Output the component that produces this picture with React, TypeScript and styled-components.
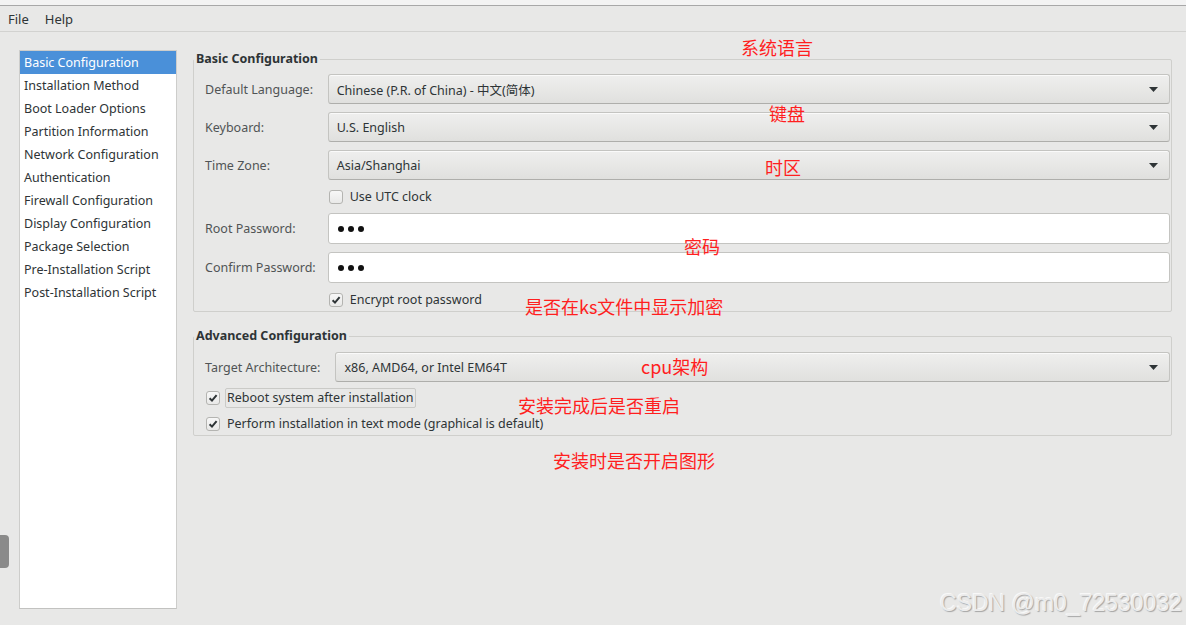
import React from 'react';
import styled, { createGlobalStyle } from 'styled-components';

const GlobalStyle = createGlobalStyle`
  html, body {
    margin: 0;
    padding: 0;
    background: #e8e8e7;
  }
  body {
    font-family: "Noto Sans", "Noto Sans CJK SC", sans-serif;
    font-size: 12.5px;
    color: #2e3436;
  }
`;

const Window = styled.div`
  position: relative;
  width: 1186px;
  height: 625px;
  overflow: hidden;
  background: #e8e8e7;
`;

const TopStrip = styled.div`
  height: 5px;
  background: #f3f3f3;
  border-bottom: 1px solid #a8a8a8;
`;

const MenuBar = styled.div`
  height: 25px;
  display: flex;
  align-items: center;
  gap: 16px;
  padding-left: 8px;
  border-bottom: 1px solid #d2d2d0;
  font-size: 13px;
`;

const MenuItem = styled.span`
  color: #2e3436;
`;

const Body = styled.div`
  display: flex;
  gap: 16px;
  padding: 18px 0 0 19px;
`;

const Sidebar = styled.ul`
  list-style: none;
  margin: 0;
  padding: 0;
  width: 156px;
  height: 557px;
  background: #ffffff;
  border: 1px solid #cdcdcb;
  border-bottom-color: #c2c2c0;
`;

const SideItem = styled.li<{ $active?: boolean }>`
  height: 23px;
  line-height: 23px;
  padding-left: 4px;
  white-space: nowrap;
  background: ${(p) => (p.$active ? '#4a90d9' : 'transparent')};
  color: ${(p) => (p.$active ? '#ffffff' : '#2e3436')};
`;

const Main = styled.div`
  width: 979px;
  display: flex;
  flex-direction: column;
  gap: 16px;
  padding-top: 1px;
`;

const Frame = styled.fieldset`
  margin: 0;
  padding: 0;
  min-width: 0;
  border: 1px solid #cfcfcc;
  border-radius: 2px;
`;

const Legend = styled.legend`
  padding: 0 2px;
  line-height: 16px;
  font-weight: bold;
  font-size: 12.5px;
  color: #2e3436;
`;

const FormGrid = styled.div<{ $top: number; $bottom: number; $gap: number; $colGap: number }>`
  display: grid;
  grid-template-columns: auto 1fr;
  column-gap: ${(p) => p.$colGap}px;
  row-gap: ${(p) => p.$gap}px;
  align-items: center;
  padding: ${(p) => p.$top}px 1px ${(p) => p.$bottom}px 11px;
`;

const FieldLabel = styled.label`
  color: #505455;
  white-space: nowrap;
`;

const Combo = styled.div`
  height: 28px;
  display: flex;
  align-items: center;
  justify-content: space-between;
  padding: 0 11px 0 8px;
  border: 1px solid #c4c4c1;
  border-bottom-color: #aeaeab;
  border-radius: 3px;
  background: linear-gradient(#efefee, #e0e0de);
  box-shadow: inset 0 1px 0 rgba(255, 255, 255, 0.7);
  color: #2e3436;
`;

const Entry = styled.div`
  height: 29px;
  display: flex;
  align-items: center;
  gap: 4px;
  padding-left: 9px;
  border: 1px solid #c4c4c1;
  border-radius: 3px;
  background: #ffffff;
`;

const Dot = styled.span`
  width: 6px;
  height: 6px;
  border-radius: 50%;
  background: #111111;
`;

const CheckRow = styled.div<{ $span?: boolean; $indent?: number }>`
  grid-column: ${(p) => (p.$span ? '1 / -1' : '2')};
  display: flex;
  align-items: center;
  gap: 5px;
  height: ${(p) => (p.$span ? 20 : 17)}px;
  margin-left: ${(p) => p.$indent ?? 1}px;
`;

const Box = styled.span`
  width: 12px;
  height: 12px;
  flex: none;
  display: flex;
  align-items: center;
  justify-content: center;
  border: 1px solid #b4b4b1;
  border-radius: 3px;
  background: linear-gradient(#f7f7f7, #e9e9e8);
`;

const CheckLabel = styled.span<{ $focus?: boolean }>`
  padding: 0 1px;
  line-height: 18px;
  border: 1px solid ${(p) => (p.$focus ? '#cacac7' : 'transparent')};
  border-radius: 2px;
  white-space: nowrap;
  color: #2e3436;
`;

const Note = styled.span<{ $x: number; $y: number }>`
  position: absolute;
  left: ${(p) => p.$x}px;
  top: ${(p) => p.$y}px;
  font-family: "Noto Sans CJK SC", "Noto Sans", sans-serif;
  font-size: 18px;
  line-height: 18px;
  color: #ff1f1f;
  white-space: nowrap;
`;

const Watermark = styled.span`
  position: absolute;
  right: 4px;
  bottom: 8px;
  font-family: "Liberation Sans", Arial, sans-serif;
  font-size: 23px;
  color: #ececec;
  text-shadow: 1px 1px 1px #a4a4a4, -1px -1px 0 #f8f8f8;
  white-space: nowrap;
`;

const Handle = styled.span`
  position: absolute;
  left: 0;
  top: 535px;
  width: 9px;
  height: 33px;
  background: #8a8a8a;
  border-radius: 0 4px 4px 0;
`;

const Arrow = () => (
  <svg width="9" height="5" viewBox="0 0 9 5">
    <path d="M0 0h9L4.5 5z" fill="#2e3436" />
  </svg>
);

const Tick = () => (
  <svg width="10" height="10" viewBox="0 0 10 10">
    <path d="M1.6 5.2 4 7.6 8.6 2.2" fill="none" stroke="#2e3436" strokeWidth="2" />
  </svg>
);

const Check: React.FC<{ checked?: boolean; text: string; span?: boolean; focus?: boolean; indent?: number }> = ({
  checked, text, span, focus, indent,
}) => (
  <CheckRow $span={span} $indent={indent}>
    <Box>{checked && <Tick />}</Box>
    <CheckLabel $focus={focus}>{text}</CheckLabel>
  </CheckRow>
);

const Password: React.FC<{ length: number }> = ({ length }) => (
  <Entry>
    {Array.from({ length }, (_, i) => <Dot key={i} />)}
  </Entry>
);

const sections = [
  'Basic Configuration',
  'Installation Method',
  'Boot Loader Options',
  'Partition Information',
  'Network Configuration',
  'Authentication',
  'Firewall Configuration',
  'Display Configuration',
  'Package Selection',
  'Pre-Installation Script',
  'Post-Installation Script',
];

const notes = [
  { text: '系统语言', x: 741, y: 38 },
  { text: '键盘', x: 769, y: 104 },
  { text: '时区', x: 765, y: 158 },
  { text: '密码', x: 684, y: 237 },
  { text: '是否在ks文件中显示加密', x: 525, y: 297 },
  { text: 'cpu架构', x: 641, y: 357 },
  { text: '安装完成后是否重启', x: 518, y: 396 },
  { text: '安装时是否开启图形', x: 553, y: 451 },
];

const App: React.FC = () => {
  return (
    <Window>
      <GlobalStyle />
      <TopStrip />
      <MenuBar>
        <MenuItem>File</MenuItem>
        <MenuItem>Help</MenuItem>
      </MenuBar>
      <Body>
        <Sidebar>
          {sections.map((s, i) => (
            <SideItem key={s} $active={i === 0}>{s}</SideItem>
          ))}
        </Sidebar>
        <Main>
          <Frame>
            <Legend>Basic Configuration</Legend>
            <FormGrid $top={7} $bottom={3} $gap={8} $colGap={12}>
              <FieldLabel>Default Language:</FieldLabel>
              <Combo>
                <span>Chinese (P.R. of China) - 中文(简体)</span>
                <Arrow />
              </Combo>
              <FieldLabel>Keyboard:</FieldLabel>
              <Combo>
                <span>U.S. English</span>
                <Arrow />
              </Combo>
              <FieldLabel>Time Zone:</FieldLabel>
              <Combo>
                <span>Asia/Shanghai</span>
                <Arrow />
              </Combo>
              <Check text="Use UTC clock" />
              <FieldLabel>Root Password:</FieldLabel>
              <Password length={3} />
              <FieldLabel>Confirm Password:</FieldLabel>
              <Password length={3} />
              <Check checked text="Encrypt root password" />
            </FormGrid>
          </Frame>
          <Frame>
            <Legend>Advanced Configuration</Legend>
            <FormGrid $top={8} $bottom={1} $gap={6} $colGap={15}>
              <FieldLabel>Target Architecture:</FieldLabel>
              <Combo>
                <span>x86, AMD64, or Intel EM64T</span>
                <Arrow />
              </Combo>
              <Check checked span focus text="Reboot system after installation" />
              <Check checked span text="Perform installation in text mode (graphical is default)" />
            </FormGrid>
          </Frame>
        </Main>
      </Body>
      {notes.map((n) => (
        <Note key={n.text} $x={n.x} $y={n.y}>{n.text}</Note>
      ))}
      <Watermark>CSDN @m0_72530032</Watermark>
      <Handle />
    </Window>
  );
};

export default App;
